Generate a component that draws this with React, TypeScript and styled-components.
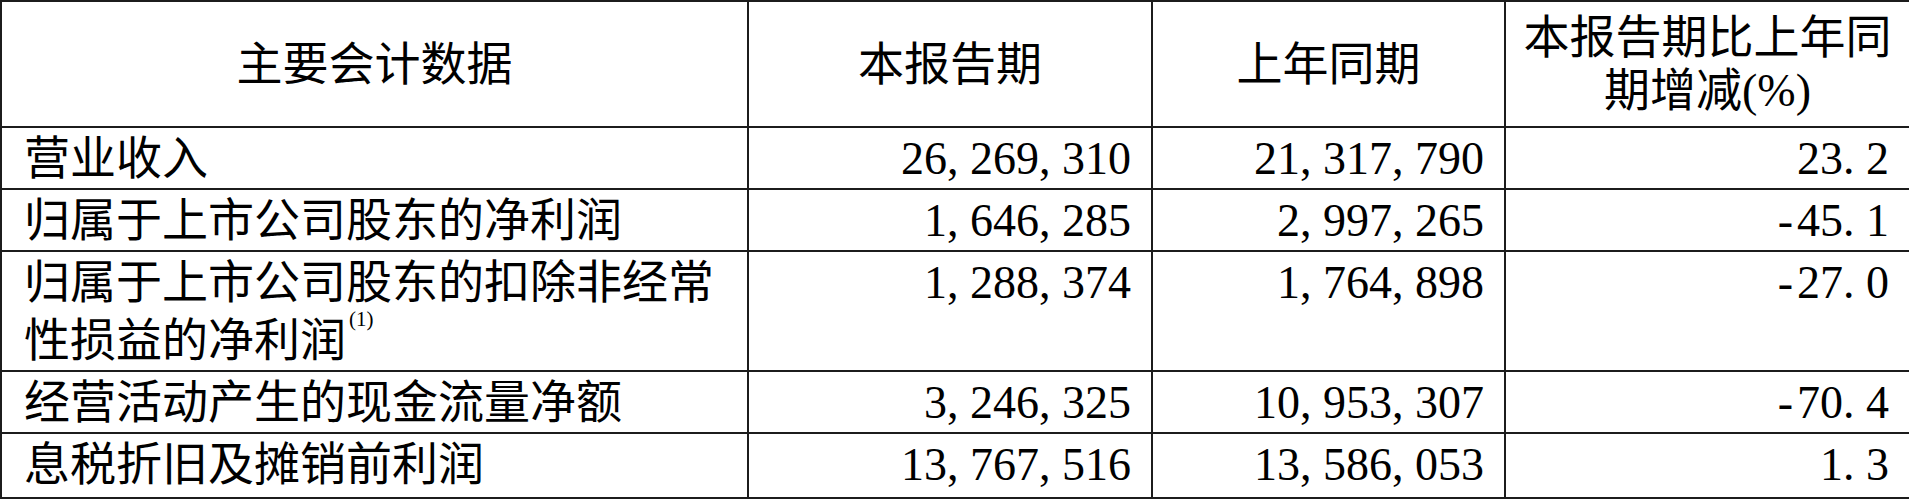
import React from "react";
import styled, { createGlobalStyle } from "styled-components";

const Global = createGlobalStyle`
  html, body { margin: 0; padding: 0; background: #ffffff; }
  body { font-family: "Liberation Serif", "Noto Sans CJK SC", serif; color: #000; }
`;

const Table = styled.table`
  width: 1909px;
  table-layout: fixed;
  border-collapse: collapse;
  border: 2px solid #1c1c1c;
  font-family: "Liberation Serif", "Noto Sans CJK SC", serif;
  font-size: 46px;
  color: #000;
`;

const HeadCell = styled.th`
  height: 124px;
  padding: 0 10px;
  border: 2px solid #1c1c1c;
  font-weight: normal;
  text-align: center;
  vertical-align: middle;
  line-height: 53px;
`;

const BodyRow = styled.tr`
  &:last-child > td {
    padding-bottom: 3px;
  }
`;

const LabelCell = styled.td`
  padding: 2px 10px 0 22px;
  border: 2px solid #1c1c1c;
  text-align: left;
  vertical-align: top;
  line-height: 58px;
`;

const NumCell = styled.td`
  padding: 2px 20px 0 10px;
  border: 2px solid #1c1c1c;
  text-align: right;
  vertical-align: top;
  line-height: 58px;
  white-space: nowrap;
`;

const Punct = styled.span<{ $center?: boolean }>`
  display: inline-block;
  width: 0.5em;
  text-align: ${(p) => (p.$center ? "center" : "left")};
`;

const Note = styled.sup`
  font-size: 21px;
  line-height: 0;
  vertical-align: 30px;
  margin-left: 3px;
`;

const Num: React.FC<{ value: string }> = ({ value }) => (
  <>
    {value.split("").map((ch, i) =>
      /[0-9]/.test(ch) ? (
        <React.Fragment key={i}>{ch}</React.Fragment>
      ) : (
        <Punct key={i} $center={ch === "-"}>
          {ch}
        </Punct>
      )
    )}
  </>
);

type Row = { label: React.ReactNode; cur: string; prev: string; pct: string };

const rows: Row[] = [
  { label: "营业收入", cur: "26,269,310", prev: "21,317,790", pct: "23.2" },
  { label: "归属于上市公司股东的净利润", cur: "1,646,285", prev: "2,997,265", pct: "-45.1" },
  {
    label: (
      <>
        归属于上市公司股东的扣除非经常性损益的净利润<Note>(1)</Note>
      </>
    ),
    cur: "1,288,374",
    prev: "1,764,898",
    pct: "-27.0",
  },
  { label: "经营活动产生的现金流量净额", cur: "3,246,325", prev: "10,953,307", pct: "-70.4" },
  { label: "息税折旧及摊销前利润", cur: "13,767,516", prev: "13,586,053", pct: "1.3" },
];

export default function App() {
  return (
    <>
      <Global />
      <Table>
        <colgroup>
          <col style={{ width: 747 }} />
          <col style={{ width: 404 }} />
          <col style={{ width: 353 }} />
          <col style={{ width: 405 }} />
        </colgroup>
        <thead>
          <tr>
            <HeadCell>主要会计数据</HeadCell>
            <HeadCell>本报告期</HeadCell>
            <HeadCell>上年同期</HeadCell>
            <HeadCell>本报告期比上年同期增减(%)</HeadCell>
          </tr>
        </thead>
        <tbody>
          {rows.map((r, i) => (
            <BodyRow key={i}>
              <LabelCell>{r.label}</LabelCell>
              <NumCell>
                <Num value={r.cur} />
              </NumCell>
              <NumCell>
                <Num value={r.prev} />
              </NumCell>
              <NumCell>
                <Num value={r.pct} />
              </NumCell>
            </BodyRow>
          ))}
        </tbody>
      </Table>
    </>
  );
}
